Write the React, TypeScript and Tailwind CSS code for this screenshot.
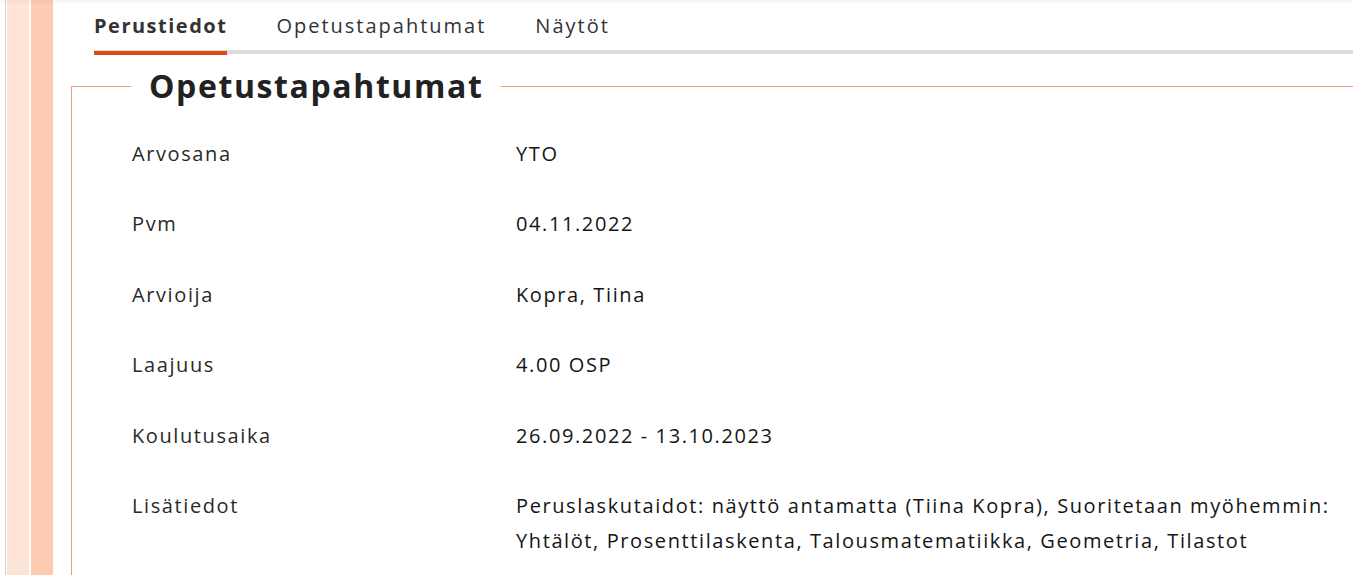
import React from "react";

const rows: { label: string; value: React.ReactNode }[] = [
  { label: "Arvosana", value: "YTO" },
  { label: "Pvm", value: "04.11.2022" },
  { label: "Arvioija", value: "Kopra, Tiina" },
  { label: "Laajuus", value: "4.00 OSP" },
  { label: "Koulutusaika", value: "26.09.2022 - 13.10.2023" },
  {
    label: "Lisätiedot",
    value: (
      <>
        Peruslaskutaidot: näyttö antamatta (Tiina Kopra), Suoritetaan myöhemmin:
        <br />
        Yhtälöt, Prosenttilaskenta, Talousmatematiikka, Geometria, Tilastot
      </>
    ),
  },
];

const tabs = ["Perustiedot", "Opetustapahtumat", "Näytöt"];

export default function App() {
  return (
    <div className="relative flex h-[575px] w-full overflow-hidden bg-white font-['Open_Sans',sans-serif] text-[#222]">
      <div className="pointer-events-none absolute inset-x-0 top-0 h-[5px] bg-gradient-to-b from-black/[0.04] to-transparent" />

      {/* side stripes */}
      <div className="flex shrink-0">
        <div className="w-[5px]" />
        <div className="w-px bg-[#d4d4d4]" />
        <div className="w-px" />
        <div className="w-[22px] bg-[#fee4d7]" />
        <div className="w-[2px]" />
        <div className="w-[22px] bg-[#fdcbb2]" />
      </div>

      <div className="flex min-w-0 flex-1 flex-col">
        <nav className="ml-[41px] flex items-end gap-[49px] border-b-4 border-[#dcdcdc] pt-[12px]">
          {tabs.map((t, i) => (
            <div
              key={t}
              className={
                i === 0
                  ? "-mb-[5px] border-b-4 border-[#dd4a0b] pb-[11px] text-[20px] leading-[28px] font-bold tracking-[0.075em] text-[#333]"
                  : "-mb-[5px] border-b-4 border-transparent pb-[11px] text-[20px] leading-[28px] tracking-[0.1em] text-[#333]"
              }
            >
              {t}
            </div>
          ))}
        </nav>

        <fieldset className="mt-[12px] -mr-[30px] ml-[18px] border border-[#ef9f80] pb-[40px]">
          <legend className="ml-[59px] px-[18px] text-[32px] leading-[40px] font-bold tracking-[0.05em] text-[#222]">
            Opetustapahtumat
          </legend>
          <div className="grid grid-cols-[384px_1fr] gap-y-[35.2px] pt-[30px] pl-[60px] text-[20px] leading-[35.2px] tracking-[0.08em]">
            {rows.map((r) => (
              <React.Fragment key={r.label}>
                <div className="text-[#2a2a2a]">{r.label}</div>
                <div className="text-[#151515]">{r.value}</div>
              </React.Fragment>
            ))}
          </div>
        </fieldset>
      </div>
    </div>
  );
}
